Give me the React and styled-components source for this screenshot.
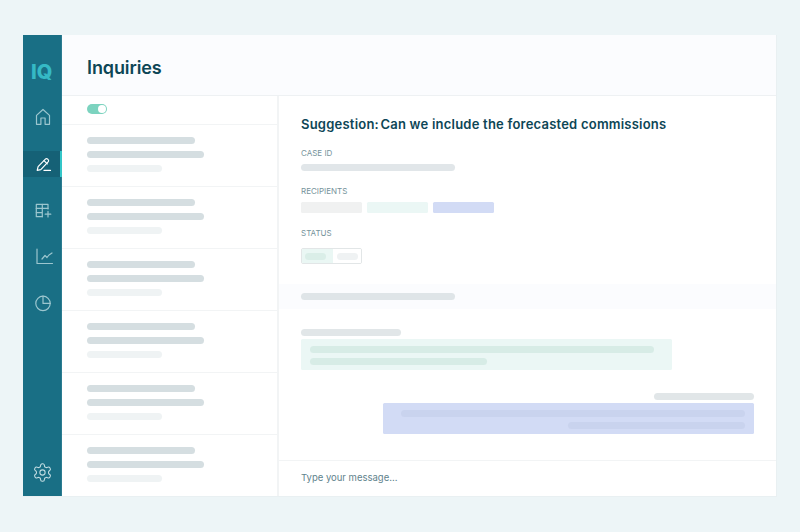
import React from "react";
import styled, { createGlobalStyle } from "styled-components";

const Global = createGlobalStyle`
  html, body { margin: 0; padding: 0; background: #edf5f7; }
  * { box-sizing: border-box; }
`;

const Page = styled.div`
  width: 800px;
  height: 532px;
  padding: 35px 23px 35px 23px;
  background: #edf5f7;
  font-family: Inter, "Liberation Sans", sans-serif;
`;
const Shell = styled.div`
  display: flex;
  height: 462px;
  background: #fff;
  border-right: 1px solid #e9f0f2;
  border-bottom: 1px solid #e9f0f2;
`;
const Sidebar = styled.aside`
  flex: 0 0 39px;
  display: flex;
  flex-direction: column;
  align-items: stretch;
  background: #196f85;
  border-right: 1px solid #2c7c91;
`;
const Logo = styled.div`
  height: 69px;
  padding: 25px 0 0 8px;
  font-size: 20px;
  line-height: 24px;
  font-weight: 800;
  color: #35b9c5;
`;
const Nav = styled.nav`
  display: flex;
  flex-direction: column;
  gap: 20px;
`;
const NavItem = styled.div`
  height: 26.5px;
  width: 39px;
  display: flex;
  align-items: center;
  justify-content: center;
  color: ${(p) => (p.$active ? "#ffffff" : "#9cc6cf")};
  background: ${(p) => (p.$active ? "#156176" : "transparent")};
  box-shadow: ${(p) => (p.$active ? "inset -2px 0 0 #33c6c8" : "none")};
  margin-right: -1px;
`;
const SidebarFoot = styled.div`
  margin-top: auto;
  height: 34px;
  display: flex;
  justify-content: center;
  color: #c3dde2;
`;
const Main = styled.main`
  flex: 1;
  min-width: 0;
  display: flex;
  flex-direction: column;
`;
const Header = styled.header`
  flex: 0 0 61px;
  display: flex;
  align-items: center;
  padding: 4px 0 0 25px;
  background: #fbfcfe;
  border-bottom: 1px solid #eef1f3;
`;
const PageTitle = styled.h1`
  margin: 0;
  font-size: 18px;
  font-weight: 600;
  letter-spacing: -0.1px;
  color: #0d4656;
`;
const Columns = styled.div`
  flex: 1;
  min-height: 0;
  display: flex;
`;
const ListPane = styled.section`
  flex: 0 0 217px;
  display: flex;
  flex-direction: column;
  border-right: 2px solid #f2f4f5;
`;
const ToggleRow = styled.div`
  flex: 0 0 28.5px;
  display: flex;
  align-items: flex-start;
  padding: 8px 0 0 25px;
  border-bottom: 1.5px solid #f2f4f5;
`;
const Switch = styled.div`
  position: relative;
  width: 20px;
  height: 10px;
  border-radius: 5px;
  background: #7cd3bf;
  &::after {
    content: "";
    position: absolute;
    right: 1px;
    top: 1px;
    width: 8px;
    height: 8px;
    border-radius: 50%;
    background: #fff;
  }
`;
const ListRow = styled.div`
  flex: 0 0 62px;
  display: flex;
  flex-direction: column;
  gap: 7px;
  padding: 12.5px 0 0 25px;
  border-bottom: 1.5px solid #f2f4f5;
  &:last-child { border-bottom: 0; }
`;
const Bar = styled.div`
  flex: none;
  height: 7px;
  width: ${(p) => p.$w}px;
  border-radius: 3.5px;
  background: ${(p) => p.$c};
`;
const Detail = styled.section`
  flex: 1;
  min-width: 0;
  display: flex;
  flex-direction: column;
`;
const Info = styled.div`
  flex: 0 0 188px;
  padding: 18px 0 0 22px;
`;
const Title = styled.h2`
  margin: 0 0 14px;
  font-size: 13px;
  line-height: 20px;
  font-weight: 600;
  letter-spacing: 0.22px;
  color: #0d4656;
`;
const TitlePrefix = styled.span`
  margin-right: -2px;
`;
const Label = styled.div`
  font-size: 8px;
  line-height: 10px;
  color: #76939b;
  text-transform: uppercase;
  margin-bottom: ${(p) => p.$gap}px;
`;
const FieldGroup = styled.div`
  margin-bottom: ${(p) => p.$gap}px;
`;
const Chips = styled.div`
  display: flex;
  gap: 5px;
`;
const Chip = styled.div`
  width: 61px;
  height: 11px;
  border-radius: 1.5px;
  background: ${(p) => p.$c};
`;
const Segmented = styled.div`
  width: 61px;
  height: 16px;
  display: flex;
  border: 1px solid #e2e6e7;
  border-radius: 2px;
  overflow: hidden;
`;
const Segment = styled.div`
  flex: ${(p) => (p.$on ? "0 0 31px" : "1")};
  display: flex;
  align-items: center;
  justify-content: ${(p) => (p.$on ? "flex-start" : "center")};
  padding-left: ${(p) => (p.$on ? "3px" : "0")};
  background: ${(p) => (p.$on ? "#eaf7f4" : "#fff")};
`;
const SegmentPill = styled.div`
  width: 21px;
  height: 7px;
  border-radius: 3.5px;
  background: ${(p) => (p.$on ? "#daeee8" : "#eff2f3")};
`;
const Band = styled.div`
  flex: 0 0 25px;
  display: flex;
  align-items: center;
  padding-left: 22px;
  background: #fbfcfe;
`;
const Thread = styled.div`
  flex: 1;
  min-height: 0;
  display: flex;
  flex-direction: column;
  padding: 20px 22px 0 22px;
`;
const Message = styled.div`
  display: flex;
  flex-direction: column;
  gap: 3px;
  align-items: ${(p) => (p.$out ? "flex-end" : "flex-start")};
  margin-bottom: 23px;
`;
const Bubble = styled.div`
  width: 371px;
  height: 31px;
  display: flex;
  flex-direction: column;
  gap: 5px;
  padding: 7px 9px 0;
  align-items: ${(p) => (p.$out ? "flex-end" : "flex-start")};
  background: ${(p) => (p.$out ? "#d2dbf5" : "#ebf7f5")};
  border-radius: 1.5px;
`;
const Composer = styled.div`
  flex: 0 0 36px;
  display: flex;
  align-items: center;
  padding: 0 0 2px 22px;
  border-top: 1.5px solid #f2f4f5;
  font-size: 9.5px;
  color: #5f838d;
`;

const IconSvg = styled.svg`
  display: block;
  overflow: visible;
  fill: none;
  stroke: currentColor;
  stroke-width: 1.2;
  stroke-linecap: round;
  stroke-linejoin: round;
`;

const Home = () => (
  <IconSvg width="18" height="18" viewBox="0 0 18 18">
    <path d="M2.5 7.4 9 1.5l6.5 5.9v8.9h-4.4V10H6.9v6.3H2.5z" />
  </IconSvg>
);
const Pen = () => (
  <IconSvg width="18" height="18" viewBox="0 0 18 18" strokeWidth="1.4">
    <path d="M3.2 15.4l.9-3.7 7.3-7.5a1.6 1.6 0 0 1 2.3 0l.4.4a1.6 1.6 0 0 1 0 2.3L6.8 14.6z" />
    <path d="M10 5.6l3.3 3.3M10 15.4h6.5" />
  </IconSvg>
);
const TablePlus = () => (
  <IconSvg width="18" height="18" viewBox="0 0 18 18">
    <path d="M8.3 15.7H2.3V3.3H14V8" />
    <path d="M2.3 7.4H14M2.3 11.6h6M8.3 3.3v12.4" />
    <path d="M14 10.4v5.6M11.2 13.2h5.6" />
  </IconSvg>
);
const Chart = () => (
  <IconSvg width="18" height="18" viewBox="0 0 18 18">
    <path d="M3 1v14.5h15.5" />
    <path d="M8 11l3-3.5 2 2 2-2.5 3-2" />
  </IconSvg>
);
const Pie = () => (
  <IconSvg width="18" height="18" viewBox="0 0 18 18">
    <circle cx="9" cy="9.4" r="7.2" />
    <path d="M9 2.2v7.2h7.2" />
  </IconSvg>
);
const Gear = () => (
  <IconSvg width="21" height="21" viewBox="0 0 24 24" strokeWidth="1.9">
    <path d="M12.22 2h-.44a2 2 0 0 0-2 2v.18a2 2 0 0 1-1 1.73l-.43.25a2 2 0 0 1-2 0l-.15-.08a2 2 0 0 0-2.73.73l-.22.38a2 2 0 0 0 .73 2.73l.15.1a2 2 0 0 1 1 1.72v.51a2 2 0 0 1-1 1.74l-.15.09a2 2 0 0 0-.73 2.73l.22.38a2 2 0 0 0 2.73.73l.15-.08a2 2 0 0 1 2 0l.43.25a2 2 0 0 1 1 1.73V20a2 2 0 0 0 2 2h.44a2 2 0 0 0 2-2v-.18a2 2 0 0 1 1-1.73l.43-.25a2 2 0 0 1 2 0l.15.08a2 2 0 0 0 2.73-.73l.22-.39a2 2 0 0 0-.73-2.73l-.15-.08a2 2 0 0 1-1-1.74v-.5a2 2 0 0 1 1-1.74l.15-.09a2 2 0 0 0 .73-2.73l-.22-.38a2 2 0 0 0-2.73-.73l-.15.08a2 2 0 0 1-2 0l-.43-.25a2 2 0 0 1-1-1.73V4a2 2 0 0 0-2-2z" />
    <circle cx="12" cy="12" r="3" />
  </IconSvg>
);

const navIcons = [Home, Pen, TablePlus, Chart, Pie];
const rows = [1, 2, 3, 4, 5, 6];

export default function App() {
  return (
    <Page>
      <Global />
      <Shell>
        <Sidebar>
          <Logo>IQ</Logo>
          <Nav>
            {navIcons.map((Icon, i) => (
              <NavItem key={i} $active={i === 1}>
                <Icon />
              </NavItem>
            ))}
          </Nav>
          <SidebarFoot>
            <Gear />
          </SidebarFoot>
        </Sidebar>
        <Main>
          <Header>
            <PageTitle>Inquiries</PageTitle>
          </Header>
          <Columns>
            <ListPane>
              <ToggleRow>
                <Switch />
              </ToggleRow>
              {rows.map((r) => (
                <ListRow key={r}>
                  <Bar $w={108} $c="#d5dee1" />
                  <Bar $w={117} $c="#d5dee1" />
                  <Bar $w={75} $c="#eff3f4" />
                </ListRow>
              ))}
            </ListPane>
            <Detail>
              <Info>
                <Title>
                  <TitlePrefix>Suggestion:</TitlePrefix> Can we include the forecasted commissions
                </Title>
                <FieldGroup $gap={15}>
                  <Label $gap={6}>Case ID</Label>
                  <Bar $w={154} $c="#e1e6e9" />
                </FieldGroup>
                <FieldGroup $gap={15}>
                  <Label $gap={6}>Recipients</Label>
                  <Chips>
                    <Chip $c="#f0f1f1" />
                    <Chip $c="#ebf7f5" />
                    <Chip $c="#d2dbf5" />
                  </Chips>
                </FieldGroup>
                <FieldGroup $gap={0}>
                  <Label $gap={10}>Status</Label>
                  <Segmented>
                    <Segment $on>
                      <SegmentPill $on />
                    </Segment>
                    <Segment>
                      <SegmentPill />
                    </Segment>
                  </Segmented>
                </FieldGroup>
              </Info>
              <Band>
                <Bar $w={154} $c="#dfe5e8" />
              </Band>
              <Thread>
                <Message>
                  <Bar $w={100} $c="#e1e6e8" />
                  <Bubble>
                    <Bar $w={344} $c="#d7ece6" />
                    <Bar $w={177} $c="#d7ece6" />
                  </Bubble>
                </Message>
                <Message $out>
                  <Bar $w={100} $c="#e1e6e8" />
                  <Bubble $out>
                    <Bar $w={344} $c="#c9d3ee" />
                    <Bar $w={177} $c="#c9d3ee" />
                  </Bubble>
                </Message>
              </Thread>
              <Composer>Type your message...</Composer>
            </Detail>
          </Columns>
        </Main>
      </Shell>
    </Page>
  );
}
